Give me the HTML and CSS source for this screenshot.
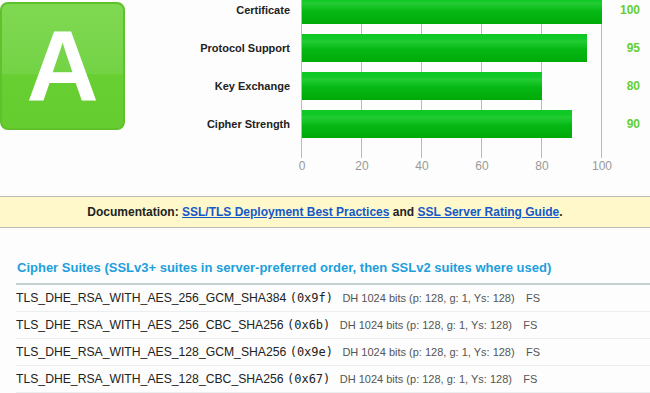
FILE: index.html
```html
<!DOCTYPE html>
<html lang="en">
<head>
  <meta charset="UTF-8" />
  <title>SSL Report</title>
  <link rel="stylesheet" href="styles.css">
</head>
<body>

  <div class="summary">
    <div class="grade">A</div>

    <div class="chart">
      <div class="plot"></div>

      <div class="label r1">Certificate</div>
      <div class="bar-cell r1"><div class="bar" style="width: 300px"></div></div>
      <div class="value r1">100</div>

      <div class="label r2">Protocol Support</div>
      <div class="bar-cell r2"><div class="bar" style="width: 285px"></div></div>
      <div class="value r2">95</div>

      <div class="label r3">Key Exchange</div>
      <div class="bar-cell r3"><div class="bar" style="width: 240px"></div></div>
      <div class="value r3">80</div>

      <div class="label r4">Cipher Strength</div>
      <div class="bar-cell r4"><div class="bar" style="width: 270px"></div></div>
      <div class="value r4">90</div>

      <div class="ticks">
        <span>0</span><span>20</span><span>40</span><span>60</span><span>80</span><span>100</span>
      </div>
    </div>
  </div>

  <div class="docs">
    Documentation: <a href="#">SSL/TLS Deployment Best Practices</a> and <a href="#">SSL Server Rating Guide</a>.
  </div>

  <h2 class="section-title">Cipher Suites (SSLv3+ suites in server-preferred order, then SSLv2 suites where used)</h2>

  <div class="suites">
    <div class="suite">
      TLS_DHE_RSA_WITH_AES_256_GCM_SHA384 <code>(0x9f)</code>
      <span class="kx">DH 1024 bits (p: 128, g: 1, Ys: 128)</span>
      <span class="fs">FS</span>
    </div>
    <div class="suite">
      TLS_DHE_RSA_WITH_AES_256_CBC_SHA256 <code>(0x6b)</code>
      <span class="kx">DH 1024 bits (p: 128, g: 1, Ys: 128)</span>
      <span class="fs">FS</span>
    </div>
    <div class="suite">
      TLS_DHE_RSA_WITH_AES_128_GCM_SHA256 <code>(0x9e)</code>
      <span class="kx">DH 1024 bits (p: 128, g: 1, Ys: 128)</span>
      <span class="fs">FS</span>
    </div>
    <div class="suite">
      TLS_DHE_RSA_WITH_AES_128_CBC_SHA256 <code>(0x67)</code>
      <span class="kx">DH 1024 bits (p: 128, g: 1, Ys: 128)</span>
      <span class="fs">FS</span>
    </div>
  </div>

</body>
</html>
```

FILE: styles.css
```css
body {
  font-family: "Liberation Sans", Arial, sans-serif;
  background-color: #fcfdfc;
  color: #222;
  margin: 0;
  padding: 0;
  overflow: hidden;
}

.summary {
  display: flex;
  align-items: flex-start;
  height: 196px;
}

.grade {
  box-sizing: border-box;
  width: 125px;
  height: 128px;
  margin-top: 2px;
  border: 2px solid #5fc12c;
  border-radius: 8px;
  background: linear-gradient(to bottom, #7fd851 0%, #78d54a 40%, #72d344 56%, #68cf33 57%, #66cd31 100%);
  color: #fff;
  font-weight: bold;
  font-size: 100px;
  line-height: 124px;
  text-align: center;
}

.chart {
  display: grid;
  grid-template-columns: 165px 301px 38px;
  grid-template-rows: repeat(4, 38px) 10px auto;
  margin-top: -4px;
  margin-left: 11px;
}

.plot {
  grid-column: 2;
  grid-row: 1 / 6;
  background-image: repeating-linear-gradient(to right, #bbbbbb 0 1px, transparent 1px 60px);
}

.r1 { grid-row: 1; }
.r2 { grid-row: 2; }
.r3 { grid-row: 3; }
.r4 { grid-row: 4; }

.label {
  grid-column: 1;
  padding-right: 11px;
  text-align: right;
  font-size: 11px;
  font-weight: bold;
  line-height: 28px;
  color: #222;
}

.bar-cell {
  grid-column: 2;
}

.bar {
  height: 28px;
  margin-left: 1px;
  background: linear-gradient(to bottom, #0ec825 0%, #11c928 18%, #25cb34 25%, #13c424 40%, #06b814 55%, #00aa08 100%);
}

.value {
  grid-column: 3;
  text-align: right;
  font-size: 12px;
  font-weight: bold;
  line-height: 28px;
  color: #63cf35;
}

.ticks {
  grid-column: 2;
  grid-row: 6;
  display: flex;
  justify-content: space-between;
  padding-left: 1px;
  margin-top: 1px;
}

.ticks span {
  width: 0;
  display: flex;
  justify-content: center;
  font-size: 12px;
  color: #999;
}

.docs {
  height: 30px;
  border-top: 1px solid #bbb;
  border-bottom: 1px solid #bbb;
  background-color: #fef8cb;
  text-align: center;
  font-size: 12px;
  font-weight: bold;
  line-height: 30px;
  color: #222;
}

.docs a {
  color: #1558c8;
}

.section-title {
  margin: 32px 0 7px 17px;
  font-size: 13px;
  line-height: 16px;
  color: #1c9fdc;
}

.suites {
  margin-left: 16px;
  border-top: 2px solid #c5d1d1;
}

.suite {
  height: 26px;
  line-height: 26px;
  border-bottom: 1px solid #eaeeee;
  font-size: 12.2px;
  color: #222;
  white-space: nowrap;
}

.suite code {
  font-family: "DejaVu Sans Mono", monospace;
  font-size: 12px;
  margin-right: 6px;
}

.kx {
  font-size: 11px;
  color: #555;
  margin-right: 8px;
}

.fs {
  font-size: 11px;
  color: #555;
}
```
